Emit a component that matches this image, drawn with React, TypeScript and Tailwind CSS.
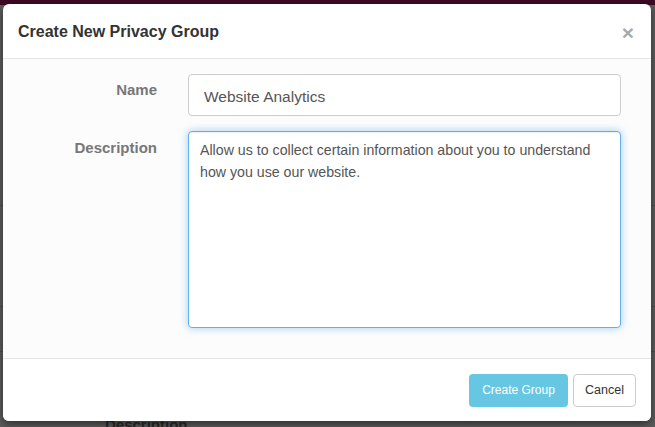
import React from "react";

const font = { fontFamily: '"Liberation Sans", Arial, sans-serif' };

export default function App() {
	return (
		<div
			className="relative h-[427px] w-[655px] overflow-hidden bg-[#5c5c5c]"
			style={font}
		>
			{/* page behind the overlay */}
			<div className="h-[5px] bg-[#3b0b22]" />
			<div className="mt-[200px] h-px bg-[#4e4e4e]" />
			<div className="mt-[100px] h-px bg-[#4e4e4e]" />
			<div className="mt-[44px] h-px bg-[#4e4e4e]" />
			<div className="pl-[105px] pt-[62px] text-[15px] font-bold text-[#2a2a2a]">
				Description
			</div>

			{/* modal */}
			<div className="absolute left-[3px] top-[4px] flex h-[417px] w-[648px] flex-col overflow-hidden rounded-[6px] bg-white shadow-[0_3px_9px_rgba(0,0,0,0.5)]">
				<div className="flex h-[55px] items-center justify-between border-b border-[#e5e5e5] px-[15px] pt-[2px]">
					<h4 className="text-[16px] font-bold text-[#333]">
						Create New Privacy Group
					</h4>
					<span className="pr-[2px] text-[21px] font-bold leading-none text-[#aaa]">
						×
					</span>
				</div>

				<div className="flex-1 bg-[#fcfcfc] px-[15px] pt-[15px]">
					<div className="flex">
						<label className="w-[139px] pt-[5px] text-right text-[15px] font-bold text-[#777]">
							Name
						</label>
						<div className="ml-[31px] flex h-[42px] w-[433px] items-center rounded-[4px] border border-[#ccc] bg-white px-[15px] pt-[3px] text-[15.5px] text-[#555]">
							Website Analytics
						</div>
					</div>
					<div className="mt-[15px] flex">
						<label className="w-[139px] pt-[6px] text-right text-[15px] font-bold text-[#777]">
							Description
						</label>
						<div className="ml-[31px] h-[197px] w-[433px] rounded-[4px] border border-[#66afe9] bg-white px-[11px] pt-[7px] text-[14.2px] leading-[22px] text-[#555] shadow-[inset_0_1px_1px_rgba(0,0,0,0.075),0_0_8px_rgba(102,175,233,0.6)]">
							Allow us to collect certain information about you to understand
							how you use our website.
						</div>
					</div>
				</div>

				<div className="flex h-[63px] items-center justify-end gap-[5px] border-t border-[#e5e5e5] bg-white px-[15px]">
					<button className="h-[33px] w-[99px] rounded-[4px] bg-[#67c7e2] text-[12px] text-white">
						Create Group
					</button>
					<button className="h-[33px] w-[63px] rounded-[4px] border border-[#ccc] bg-white text-[12.5px] text-[#333]">
						Cancel
					</button>
				</div>
			</div>
		</div>
	);
}
